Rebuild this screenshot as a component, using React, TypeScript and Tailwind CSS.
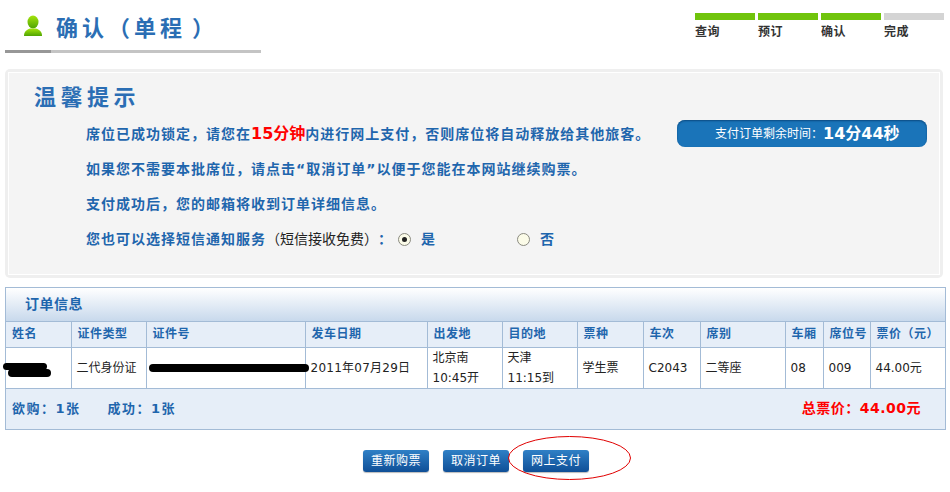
const font = '[font-family:"DejaVu_Sans","Noto_Sans_CJK_SC",sans-serif]';

const steps = [
  { label: '查询', done: true },
  { label: '预订', done: true },
  { label: '确认', done: true },
  { label: '完成', done: false },
];

const columns = [
  { label: '姓名', width: 'w-[65px]' },
  { label: '证件类型', width: 'w-[75px]' },
  { label: '证件号', width: 'w-[159px]' },
  { label: '发车日期', width: 'w-[122px]' },
  { label: '出发地', width: 'w-[75px]' },
  { label: '目的地', width: 'w-[75px]' },
  { label: '票种', width: 'w-[66px]' },
  { label: '车次', width: 'w-[57px]' },
  { label: '席别', width: 'w-[85px]' },
  { label: '车厢', width: 'w-[38px]' },
  { label: '席位号', width: 'w-[47px]' },
  { label: '票价（元）', width: 'w-[75px]' },
];

const PersonIcon = () => (
  <svg width="20" height="22" viewBox="0 0 20 22" className="shrink-0">
    <defs>
      <linearGradient id="person" x1="0" y1="0" x2="0" y2="1">
        <stop offset="0" stopColor="#a4e40c" />
        <stop offset="1" stopColor="#4fa402" />
      </linearGradient>
    </defs>
    <ellipse cx="10" cy="7" rx="5.5" ry="6.5" fill="url(#person)" />
    <path d="M1 21c0-4 2-6 6-7.5h6c4 1.5 6 3.500 6 7.500z" fill="url(#person)" />
  </svg>
);

const Radio = ({ checked }: { checked?: boolean }) => (
  <span className="flex h-[13px] w-[13px] items-center justify-center rounded-full border border-[#8a8a80] bg-[#fbfbe8]">
    {checked && <span className="h-[5px] w-[5px] rounded-full bg-[#222]" />}
  </span>
);

const Btn = ({ children }: { children: string }) => (
  <button className="h-[22px] w-[66px] rounded-[3px] bg-gradient-to-b from-[#2f80c6] to-[#0f4f97] text-[12px] leading-[22px] tracking-[0.5px] text-white shadow-[0_1px_1px_#bbb]">
    {children}
  </button>
);

export default function App() {
  return (
    <div className={`${font} h-[492px] w-[950px] overflow-hidden bg-white`}>
      <header className="flex h-[69px] items-start justify-between pl-[5px] pr-[6px]">
        <div className="w-[256px]">
          <div className="flex h-[50px] items-start pl-[18px] pt-[15px]">
            <PersonIcon />
            <h1 className="ml-[13px] mt-[1px] whitespace-pre text-[22px] font-bold leading-[26px] tracking-[4px] text-[#2b6eb4]">
              确认（单程<span className="ml-[6px]">）</span>
            </h1>
          </div>
          <div className="flex h-[3px] bg-[#c4c4c4]">
            <div className="w-[46px] bg-[#979797]" />
          </div>
        </div>
        <div className="mt-[13px] flex gap-[3px]">
          {steps.map((s) => (
            <div key={s.label} className="w-[60px]">
              <div className={s.done ? 'h-[7px] bg-[#70c40c]' : 'h-[7px] bg-[#d4d4d4]'} />
              <div className="mt-[4px] text-[12px] font-bold leading-[16px] tracking-[0.5px] text-[#333]">
                {s.label}
              </div>
            </div>
          ))}
        </div>
      </header>

      <section className="mx-[5px] h-[209px] w-[938px] rounded-[5px] bg-[#efefef] p-[3px]">
        <div className="relative h-[203px] border border-white bg-[#f4f4f4] pl-[25px] pt-[12px] text-[14px] font-bold leading-[20px] tracking-[1px] text-[#1f66ad]">
          <h2 className="text-[22px] leading-[26px] tracking-[4.5px] text-[#2b6eb4]">温馨提示</h2>
          <div className="ml-[52px] mt-[13px] flex flex-col gap-[15px]">
            <p>
              席位已成功锁定，请您在
              <span className="text-[16px] text-[#ff0000] tracking-normal">15分钟</span>
              内进行网上支付，否则席位将自动释放给其他旅客。
            </p>
            <p>如果您不需要本批席位，请点击“取消订单”以便于您能在本网站继续购票。</p>
            <p>支付成功后，您的邮箱将收到订单详细信息。</p>
            <div className="flex items-center">
              <span>您也可以选择短信通知服务</span>
              <span className="font-normal tracking-normal text-[#222]">（短信接收免费）</span>
              <span>：</span>
              <span className="ml-[5px]"><Radio checked /></span>
              <span className="ml-[10px]">是</span>
              <span className="ml-[81px]"><Radio /></span>
              <span className="ml-[10px]">否</span>
            </div>
          </div>
          <div className="absolute right-[12px] top-[47px] flex h-[27px] w-[250px] items-center rounded-[8px] bg-[#1a74b9] pl-[38px] font-normal text-white shadow-[inset_0_1px_2px_#0b4a80]">
            <span className="w-[108px] whitespace-nowrap text-[12px] tracking-normal">支付订单剩余时间：</span>
            <span className="text-[16px] font-bold tracking-normal">14分44秒</span>
          </div>
        </div>
      </section>

      <section className="ml-[5px] mt-[9px] w-[941px] border border-[#a3bbd6] text-[12px]">
        <div className="h-[34px] border-b border-[#a3bbd6] bg-gradient-to-b from-white to-[#c8d9ec] pl-[19px] text-[14px] font-bold leading-[32px] tracking-[0.5px] text-[#1f66ad]">
          订单信息
        </div>
        <table className="w-full table-fixed border-collapse">
          <thead>
            <tr className="h-[25px] bg-[#e6eef8]">
              {columns.map((c, i) => (
                <th
                  key={c.label}
                  className={`${c.width} ${i < 11 ? 'border-r' : ''} whitespace-nowrap border-b border-[#a3bbd6] pl-[6px] text-left font-bold tracking-[0.5px] text-[#1f66ad]`}
                >
                  {c.label}
                </th>
              ))}
            </tr>
          </thead>
          <tbody>
            <tr className="h-[41px] text-[#222] [&>td]:border-b [&>td]:border-[#a3bbd6] [&>td]:pl-[5px] [&>td:not(:last-child)]:border-r">
              <td className="relative">
                <span className="absolute left-[-3px] top-[15px] h-[7px] w-[44px] rounded-full bg-black" />
                <span className="absolute left-[2px] top-[21px] h-[8px] w-[43px] rounded-full bg-black" />
              </td>
              <td>二代身份证</td>
              <td className="relative">
                <span className="absolute left-[2px] top-[16px] h-[8px] w-[160px] rounded-full bg-black" />
              </td>
              <td className="whitespace-nowrap tracking-[0.25px]">2011年07月29日</td>
              <td className="leading-[20px]">北京南<br />10:45开</td>
              <td className="leading-[20px]">天津<br />11:15到</td>
              <td>学生票</td>
              <td>C2043</td>
              <td>二等座</td>
              <td>08</td>
              <td>009</td>
              <td>44.00元</td>
            </tr>
          </tbody>
        </table>
        <div className="flex h-[40px] items-center justify-between bg-[#e6eef8] pl-[6px] pr-[24px] text-[13px] font-bold">
          <div className="flex gap-[27px] tracking-[1.5px] text-[#1f66ad]">
            <span>欲购：1张</span>
            <span>成功：1张</span>
          </div>
          <span className="text-[14px] tracking-[0.5px] text-[#ff0000]">总票价：44.00元</span>
        </div>
      </section>

      <div className="relative mt-[20px] flex justify-center gap-[14px] pl-[2px]">
        <Btn>重新购票</Btn>
        <Btn>取消订单</Btn>
        <Btn>网上支付</Btn>
        <svg width="125" height="46" viewBox="0 0 125 46" className="absolute left-[507px] top-[-15px]">
          <ellipse cx="62.500" cy="23" rx="61" ry="21.500" fill="none" stroke="#e00000" strokeWidth="1" />
        </svg>
      </div>
    </div>
  );
}
